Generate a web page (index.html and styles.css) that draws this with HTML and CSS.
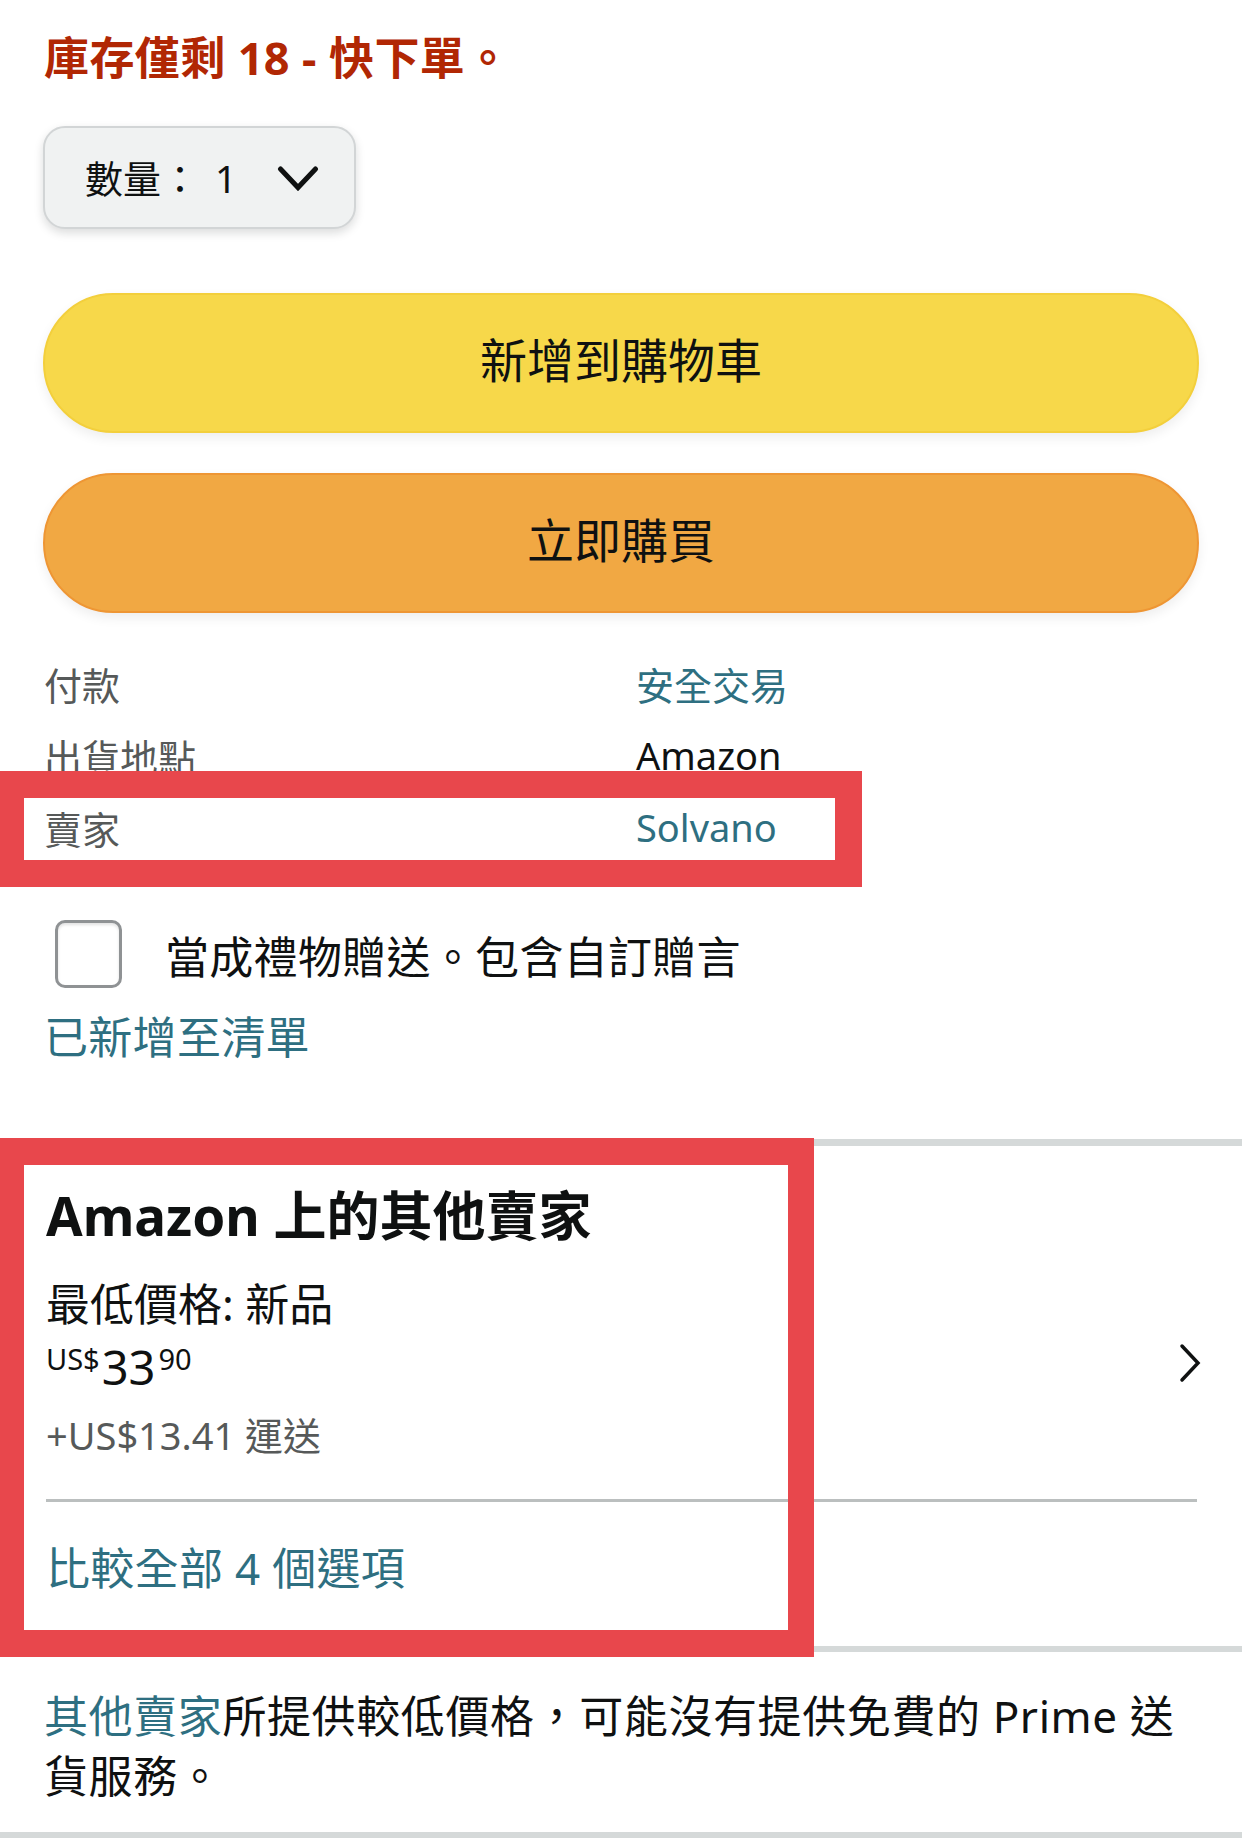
FILE: index.html
```html
<!DOCTYPE html>
<html lang="zh-Hant">
<head>
<meta charset="utf-8">
<title>購買選項</title>
<link rel="stylesheet" href="styles.css">
</head>
<body>
<main class="page">
  <div class="buy-box">
    <p class="stock">庫存僅剩 18 - 快下單。</p>
    <div class="qty">
      <span class="qty-label">數量：</span>
      <span class="qty-value">1</span>
      <svg class="qty-chevron" width="42" height="27" viewBox="0 0 42 27" aria-hidden="true">
        <polyline points="3.5,4 21,22.5 38.5,4" fill="none" stroke="#0F1111" stroke-width="5" stroke-linecap="round" stroke-linejoin="miter"/>
      </svg>
    </div>
    <button class="btn btn-cart">新增到購物車</button>
    <button class="btn btn-buy">立即購買</button>
    <div class="info">
      <span class="info-label">付款</span><a class="info-value link">安全交易</a>
      <span class="info-label">出貨地點</span><span class="info-value">Amazon</span>
      <span class="info-label">賣家</span><a class="info-value link">Solvano</a>
    </div>
    <label class="gift">
      <span class="gift-box"></span>
      <span class="gift-text">當成禮物贈送。包含自訂贈言</span>
    </label>
    <a class="list-link link">已新增至清單</a>
  </div>

  <section class="others">
    <div class="others-top">
      <div class="others-text">
        <h2 class="others-title">Amazon 上的其他賣家</h2>
        <p class="others-sub">最低價格: 新品</p>
        <div class="price"><span class="price-cur">US$</span><span class="price-whole">33</span><span class="price-frac">90</span></div>
        <p class="shipping">+US$13.41 運送</p>
      </div>
      <svg class="others-chevron" width="24" height="42" viewBox="0 0 24 42" aria-hidden="true">
        <polyline points="4,4 20,21 4,38" fill="none" stroke="#0F1111" stroke-width="3.5" stroke-linecap="round" stroke-linejoin="miter"/>
      </svg>
    </div>
    <div class="others-divider"></div>
    <a class="compare link">比較全部 4 個選項</a>
  </section>

  <p class="note"><a class="link">其他賣家</a>所提供較低價格，可能沒有提供免費的 Prime 送貨服務。</p>
  <div class="end-rule"></div>

  <div class="mark mark-seller"></div>
  <div class="mark mark-others"></div>
</main>
</body>
</html>
```

FILE: styles.css
```css
* {
  box-sizing: border-box;
}

html, body {
  margin: 0;
  padding: 0;
  background: #ffffff;
}

body {
  width: 1242px;
  height: 1838px;
  overflow: hidden;
  font-family: "Noto Sans", "Noto Sans CJK TC", sans-serif;
  color: #0F1111;
}

.page {
  position: relative;
  width: 1242px;
}

.link {
  color: #2E6F81;
  text-decoration: none;
}

.buy-box {
  padding: 28px 43px 0 44px;
  display: flex;
  flex-direction: column;
  align-items: stretch;
}

.stock {
  margin: 0;
  font-size: 45px;
  line-height: 60px;
  font-weight: 700;
  color: #B12704;
  letter-spacing: 0.4px;
}

.qty {
  margin-top: 38px;
  margin-left: -1px;
  width: 313px;
  height: 103px;
  display: flex;
  align-items: center;
  padding-left: 40px;
  background: #F0F2F2;
  border: 2px solid #D2D5D6;
  border-radius: 22px;
  box-shadow: 0 4px 10px rgba(15, 17, 17, 0.15);
  font-size: 38px;
  line-height: 50px;
}

.qty-value {
  margin-left: 16px;
}

.qty-chevron {
  margin-left: 40px;
  margin-top: 2px;
}

.btn {
  display: block;
  width: 1156px;
  height: 140px;
  margin-left: -1px;
  border-radius: 70px;
  font-family: "Noto Sans", "Noto Sans CJK TC", sans-serif;
  font-size: 47px;
  line-height: 60px;
  color: #0F1111;
  text-align: center;
  padding: 0 0 6px;
  box-shadow: 0 5px 12px rgba(15, 17, 17, 0.07);
}

.btn-cart {
  margin-top: 64px;
  background: #F7D84A;
  border: 2px solid #F3CF3C;
}

.btn-buy {
  margin-top: 40px;
  background: #F1A843;
  border: 2px solid #EE9634;
}

.info {
  margin-top: 34px;
  display: grid;
  grid-template-columns: 592px 1fr;
  grid-auto-rows: 72px;
  align-items: center;
  font-size: 38px;
}

.info-label {
  color: #565959;
}

.info-value {
  color: #0F1111;
}

.info-value.link {
  color: #2E6F81;
}

.gift {
  margin-top: 57px;
  height: 68px;
  display: flex;
  align-items: center;
}

.gift-box {
  width: 67px;
  height: 68px;
  margin-left: 11px;
  border: 3px solid #8F9294;
  border-radius: 10px;
  background: #ffffff;
  box-shadow: inset 0 2px 3px rgba(15, 17, 17, 0.12);
  flex: none;
}

.gift-text {
  margin-left: 43px;
  margin-top: 6px;
  font-size: 44px;
  line-height: 60px;
  letter-spacing: 0.3px;
}

.list-link {
  margin-top: 19px;
  font-size: 44px;
  line-height: 60px;
  letter-spacing: 0.3px;
}

.others {
  margin-top: 72px;
  border-top: 7px solid #D5D9D9;
  border-bottom: 6px solid #D5D9D9;
  padding: 35px 45px 48px 46px;
}

.others-top {
  display: flex;
  justify-content: space-between;
  align-items: center;
}

.others-text {
  display: flex;
  flex-direction: column;
}

.others-title {
  margin: 0;
  font-size: 53px;
  line-height: 70px;
  font-weight: 700;
}

.others-sub {
  margin: 23px 0 0;
  font-size: 44px;
  line-height: 60px;
}

.price {
  margin-top: 10px;
  display: flex;
  align-items: flex-start;
  height: 47px;
}

.price-cur,
.price-frac {
  font-size: 29px;
  line-height: 1;
}

.price-cur {
  margin-right: 2px;
}

.price-whole {
  font-size: 47px;
  line-height: 1;
  margin-top: 0;
  margin-right: 3px;
}

.shipping {
  margin: 19px 0 0;
  font-size: 38px;
  line-height: 50px;
  color: #565959;
}

.others-chevron {
  margin-top: 84px;
  margin-right: -5px;
  flex: none;
}

.others-divider {
  margin-top: 39px;
  height: 3px;
  background: #BBBFBF;
}

.compare {
  display: block;
  margin-top: 36px;
  font-size: 44px;
  line-height: 60px;
  letter-spacing: 0.3px;
}

.note {
  margin: 34px 0 0;
  padding: 0 44px;
  font-size: 44px;
  line-height: 60px;
  letter-spacing: 0.6px;
}

.end-rule {
  margin-top: 26px;
  height: 10px;
  border-top: 7px solid #D5D9D9;
}

.mark {
  position: absolute;
  left: 0;
  border-style: solid;
  border-color: #E8474C;
  pointer-events: none;
}

.mark-seller {
  top: 771px;
  width: 862px;
  height: 116px;
  border-width: 27px 27px 27px 24px;
}

.mark-others {
  top: 1138px;
  width: 814px;
  height: 519px;
  border-width: 27px 26px 27px 24px;
}
```
